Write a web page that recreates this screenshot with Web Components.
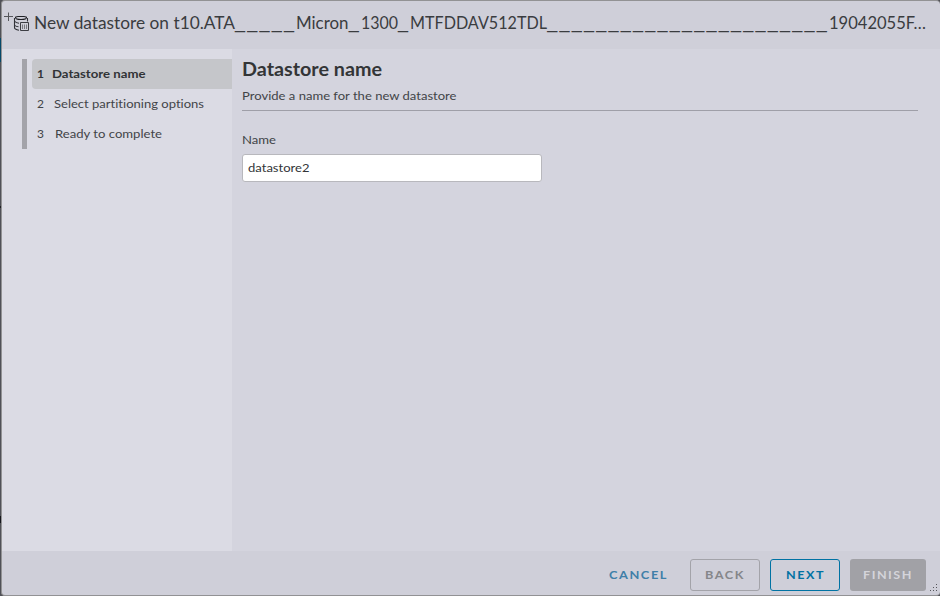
<!DOCTYPE html>
<html lang="en">
<head>
<meta charset="utf-8">
<title>New datastore</title>
<style>
html,body{margin:0;height:100%;overflow:hidden;background:#505157}
body{font-family:Lato,"Liberation Sans",sans-serif;font-variant-ligatures:none;color:#333537}
</style>
</head>
<body>
<datastore-wizard></datastore-wizard>
<script>
// A run of text stretched to an exact width.
customElements.define('fit-text', class extends HTMLElement {
  connectedCallback() {
    if (this.shadowRoot) return;
    const w = +this.getAttribute('w');
    this.attachShadow({mode:'open'}).innerHTML = `<style>:host{display:inline-block;width:${w}px;white-space:pre}
      span{display:inline-block;transform-origin:0 50%;white-space:pre}</style><span><slot></slot></span>`;
    const s = this.shadowRoot.querySelector('span');
    const n = s.offsetWidth ? s.getBoundingClientRect().width : w;
    s.style.transform = `scaleX(${w / n})`;
  }
});
customElements.define('under-score', class extends HTMLElement {
  connectedCallback() {
    if (this.shadowRoot) return;
    this.attachShadow({mode:'open'}).innerHTML = `<style>:host{display:inline-block;font-family:"Liberation Sans",sans-serif;font-size:18px;letter-spacing:2.24px;width:${12.25*this.textContent.length}px;white-space:nowrap}</style><slot></slot>`;
  }
});
customElements.define('datastore-icon', class extends HTMLElement {
  constructor() {
    super();
    this.attachShadow({mode:'open'}).innerHTML = `<style>:host{display:block;width:27px;height:22px}svg{display:block}</style>
    <svg width="27" height="22" viewBox="3 10 27 22" fill="none">
      <path d="M4 16.5H13M8.5 12.5V21" stroke="#55565b"/>
      <path d="M15.500 17.500Q15.500 16.500 18 16.500H24Q26.500 16.500 26.500 17.500Q26.500 19.500 21 19.500Q15.500 19.500 15.500 17.500Z" stroke="#202126" stroke-width="1.1"/>
      <path d="M14.500 18V27.500Q14.500 29.500 19 30.200M27.500 18V21.500M15 21.500Q16 23 19 23.200M15 25.500Q16 26.700 18.500 26.800" stroke="#303137" stroke-width="1.1"/>
      <path d="M20.500 22.500H28.500V30.500H20.500Z" stroke="#3c3d43"/>
      <path d="M22.500 24.500V29M24.500 24.500V29M26.500 24.500V29" stroke="#77787e"/>
    </svg>`;
  }
});
customElements.define('wizard-step', class extends HTMLElement {
  connectedCallback() {
    if (this.shadowRoot) return;
    this.attachShadow({mode:'open'}).innerHTML = `<style>
      :host{display:flex;align-items:center;height:30px;margin-left:5px;padding:0 0 2px 5px;box-sizing:border-box;border-radius:4px 0 0 4px;font-size:12px;color:#424448}
      :host([active]){background:#c5c6ca;color:#313336;font-weight:700}
      b{font-weight:inherit;width:${this.getAttribute('gap')}px}</style>
      <b>${this.getAttribute('number')}</b><slot></slot>`;
  }
});
customElements.define('wizard-button', class extends HTMLElement {
  constructor() {
    super();
    this.attachShadow({mode:'open'}).innerHTML = `<style>
      :host{display:block;font-size:11.5px;font-weight:700}
      button{all:unset;display:flex;align-items:center;justify-content:center;box-sizing:border-box;width:100%;height:32px;padding-bottom:1px;border:1px solid transparent;border-radius:3px;letter-spacing:1.4px;color:#407fa8}
      :host([kind=back]) button{border-color:#a3a3a9;color:#85868a}
      :host([kind=next]) button{border-color:#0072a3;color:#0072a3}
      :host([kind=finish]) button{background:#a1a1a6;color:#d4d4da}</style>
      <button><slot></slot></button>`;
  }
});
customElements.define('datastore-wizard', class extends HTMLElement {
  constructor() {
    super();
    this.attachShadow({mode:'open'}).innerHTML = `<style>
      :host{display:block;box-sizing:border-box;width:940px;height:596px;padding:0 0 0 1px;background:linear-gradient(#505157 38px,#06496a 38px,#06496a 62px,#505157 62px,#505157 206px,#202126 206px,#202126 208px,#505157 208px,#505157 516px,#15161c 516px,#15161c 523px,#505157 523px)}
      .dialog{position:relative;box-sizing:border-box;height:596px;display:grid;grid-template-rows:48px 502px 44px;border:1px solid #929294;border-right:0;border-radius:4px;overflow:hidden;background:#cfcfd9}
      header{display:flex;align-items:flex-start;padding-left:1px}
      datastore-icon{margin-top:9px}
      h1{margin:0 0 0 4px;font-size:16.5px;line-height:24px;height:24px;padding-top:10px;font-weight:400;display:flex;white-space:nowrap;color:#3a3c3f}
      under-score{line-height:22px}
      main{display:grid;grid-template-columns:230px 1fr;min-height:0}
      nav{background:#dbdbe4;padding:10px 0 0 20px}
      .steps{height:90px;border-left:5px solid #a3a3a9}
      section{background:#d4d4de;padding:8px 22px 0 10px}
      h2{margin:0;font-size:18px;line-height:24px;height:24px;font-weight:700}
      p{margin:6px 0 0;padding-bottom:5px;font-size:12px;line-height:18px;border-bottom:1px solid #9f9fa8}
      p,label{color:#424448}
      label{display:block;margin-top:20px;font-size:12px;line-height:18px}
      .field{box-sizing:border-box;width:300px;height:28px;margin-top:5px;padding:0 5px;background:#fff;border:1px solid #b8b8bd;border-radius:3px;font-size:12px;line-height:25px}
      footer{display:flex;padding:8px 14px 0 0;justify-content:flex-end}
      .grip{position:absolute;right:1px;bottom:2px}
      </style>
      <div class="dialog">
        <header><datastore-icon></datastore-icon>
          <h1><fit-text w="201">New datastore on t10.ATA</fit-text><under-score>_____</under-score><fit-text w="52.500">Micron</fit-text><under-score>_</under-score><fit-text w="37">1300</fit-text><under-score>_</under-score><fit-text w="137">MTFDDAV512TDL</fit-text><under-score>_______________________</under-score><fit-text w="97">19042055F…</fit-text></h1>
        </header>
        <main>
          <nav><div class="steps">
            <wizard-step active number="1" gap="15"><fit-text w="93.500">Datastore name</fit-text></wizard-step>
            <wizard-step number="2" gap="17"><fit-text w="150">Select partitioning options</fit-text></wizard-step>
            <wizard-step number="3" gap="17.500"><fit-text w="107">Ready to complete</fit-text></wizard-step>
          </div></nav>
          <section>
            <h2><fit-text w="140">Datastore name</fit-text></h2>
            <p><fit-text w="214.500">Provide a name for the new datastore</fit-text></p>
            <label><fit-text w="34">Name</fit-text></label>
            <div class="field"><fit-text w="61.500">datastore2</fit-text></div>
          </section>
        </main>
        <footer>
          <wizard-button style="width:76px;margin-right:14px"><fit-text w="59">CANCEL</fit-text></wizard-button>
          <wizard-button kind="back" style="width:70px;margin-right:10px"><fit-text w="40">BACK</fit-text></wizard-button>
          <wizard-button kind="next" style="width:70px;margin-right:10px"><fit-text w="39">NEXT</fit-text></wizard-button>
          <wizard-button kind="finish" style="width:76px"><fit-text w="50">FINISH</fit-text></wizard-button>
        </footer>
        <svg class="grip" width="9" height="9" fill="#55565b"><path d="M6 0h1v1h-1zM3 3h1v1h-1zM6 3h1v1h-1zM0 6h1v1h-1zM3 6h1v1h-1zM6 6h1v1h-1z"/></svg>
      </div>`;
  }
});
</script>
</body>
</html>
